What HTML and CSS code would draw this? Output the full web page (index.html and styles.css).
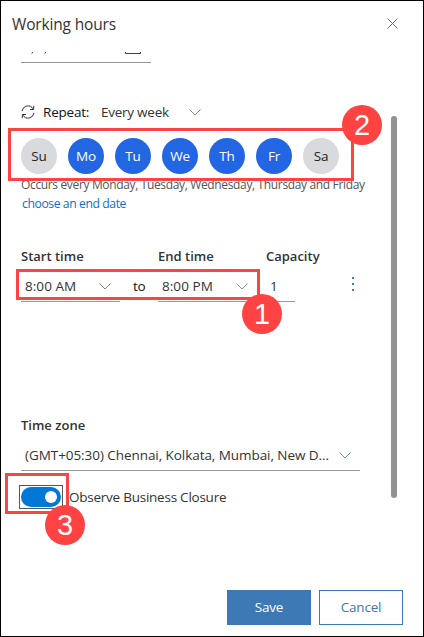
FILE: index.html
```html
<!DOCTYPE html>
<html lang="en">
<head>
<meta charset="utf-8">
<title>Working hours</title>
<link rel="stylesheet" href="styles.css">
</head>
<body>
<div class="panel">
  <header class="header">
    <h1 class="title">Working hours</h1>
    <svg class="close" width="11" height="11" viewBox="0 0 11 11"><path d="M.5.5l10 10M10.5.5l-10 10"/></svg>
  </header>
  <main class="content">
    <div class="date-field">
      <svg width="129" height="10" viewBox="0 0 129 10"><path class="ink" d="M11.6 0l-.7 1.6M24.6 0l-.7 1.6"/><path class="ink" d="M104.5 0v1.5h15V0"/></svg>
    </div>
    <div class="repeat">
      <svg class="sync" width="14" height="14" viewBox="0 0 14 14"><path d="M1 6.2A6 6 0 0 1 12.2 4M12.7.8v3.7H9M13 7.8A6 6 0 0 1 1.8 10M1.3 13.2V9.5H5"/></svg>
      <span class="repeat-label">Repeat:</span>
      <span class="repeat-value">Every week</span>
      <svg class="chevron" width="12" height="7" viewBox="0 0 12 7"><path d="M.5.5L6 6 11.5.5"/></svg>
    </div>
    <div class="days">
      <span class="day">Su</span><span class="day on">Mo</span><span class="day on">Tu</span><span class="day on">We</span><span class="day on">Th</span><span class="day on">Fr</span><span class="day">Sa</span>
    </div>
    <div class="occurs">Occurs every Monday, Tuesday, Wednesday, Thursday and Friday</div>
    <div class="end-link">choose an end date</div>
    <div class="times">
      <span class="label start-label">Start time</span><span></span><span class="label end-label">End time</span><span></span><span class="label cap-label">Capacity</span><span></span>
      <div class="field"><span class="t">8:00 AM</span><svg class="chevron" width="12" height="7" viewBox="0 0 12 7"><path d="M.5.5L6 6 11.5.5"/></svg></div>
      <span class="to">to</span>
      <div class="field"><span class="t">8:00 PM</span><svg class="chevron blue" width="12" height="7" viewBox="0 0 12 7"><path d="M.5.5L6 6 11.5.5"/></svg></div>
      <span></span>
      <div class="field cap"><span>1</span></div>
      <svg class="more" width="2" height="14" viewBox="0 0 2 14"><path d="M0 0h2v2H0zM0 6h2v2H0zM0 12h2v2H0z"/></svg>
    </div>
    <div class="zone">
      <div class="label zone-label">Time zone</div>
      <div class="field zone-field"><span class="zone-value">(GMT+05:30) Chennai, Kolkata, Mumbai, New D...</span><svg class="chevron blue" width="12" height="7" viewBox="0 0 12 7"><path d="M.5.5L6 6 11.5.5"/></svg></div>
    </div>
    <div class="closure">
      <span class="focus"><span class="toggle"><span class="knob"></span></span></span>
      <span class="closure-label">Observe Business Closure</span>
    </div>
  </main>
  <footer class="footer">
    <span class="btn save">Save</span><span class="btn cancel">Cancel</span>
  </footer>
  <div class="scrollbar"></div>
  <div class="mark mark-days"></div><div class="mark mark-time"></div><div class="mark mark-toggle"></div>
  <div class="badge b1">1</div><div class="badge b2">2</div><div class="badge b3">3</div>
</div>
</body>
</html>
```
FILE: styles.css
```css
* { box-sizing: border-box; }
body { margin: 0; background: #fff; font: 13.5px/20px "Open Sans", "Noto Sans", sans-serif; letter-spacing: -.2px; color: #333; }
.panel { position: relative; width: 424px; height: 637px; border: 1px solid #000; display: flex; flex-direction: column; overflow: hidden; white-space: nowrap; }
.header { height: 51px; padding: 13px 25px 0 11px; display: flex; justify-content: space-between; }
.title { margin: 0; font-size: 15.5px; line-height: 21px; font-weight: 400; letter-spacing: -.16px; }
.close { margin-top: 4px; fill: none; stroke: #4c7897; stroke-width: 1; }
.content { height: 527px; padding-left: 20px; overflow: hidden; }
.date-field { width: 130px; height: 11px; border-bottom: 1px solid #949494; display: flex; }
.ink { fill: none; stroke: #404040; }
.repeat { display: flex; align-items: center; height: 20px; margin-top: 39px; color: #111; }
.sync { fill: none; stroke: #333; margin-right: 8px; }
.repeat-label { width: 58px; }
.repeat-value { width: 88px; color: #333; letter-spacing: -.25px; }
.chevron { fill: none; stroke: #8d8778; flex: none; }
.chevron.blue { stroke: #6c98a5; }
.days { display: flex; gap: 11px; margin-top: 16px; }
.day { width: 36px; height: 36px; border-radius: 50%; background: #d9dadd; color: #222; line-height: 36px; text-align: center; }
.day.on { background: #2266e3; color: #fff; }
.occurs { font-size: 12px; line-height: 18px; margin-top: 2px; color: #555; letter-spacing: -.35px; }
.end-link { font-size: 12.2px; line-height: 18px; margin: 1px 0 0 1px; color: #0f6fc9; letter-spacing: -.42px; }
.times { display: grid; grid-template-columns: 99px 38px 99px 8px 30px 60px; grid-template-rows: 20px 36px; margin-top: 33px; }
.label { font-weight: 600; color: #333; font-size: 13px; letter-spacing: 0; }
.cap-label { padding-left: 1px; }
.field { display: flex; align-items: center; justify-content: space-between; border-bottom: 1px solid #9a9a9a; padding: 5px 9px 0 4px; }
.t { letter-spacing: .05px; }
.cap { padding-left: 5px; }
.to { padding: 10px 0 0 13px; color: #111; }
.more { align-self: center; justify-self: end; fill: #4778bd; margin-right: 1px; }
.zone { margin-top: 113px; width: 339px; }
.zone-field { height: 36px; }
.zone-value { letter-spacing: -.06px; }
.closure { display: flex; align-items: center; height: 24px; margin-top: 14px; }
.focus { width: 44px; height: 24px; margin-left: -2px; padding: 1px; border: 1px solid #555; }
.toggle { display: flex; align-items: center; justify-content: flex-end; width: 40px; height: 20px; padding-right: 4px; border-radius: 10px; background: #0078d7; }
.knob { width: 12px; height: 12px; border-radius: 50%; background: #fff; }
.closure-label { margin-left: 6px; letter-spacing: -.24px; }
.footer { display: flex; gap: 8px; justify-content: flex-end; padding: 11px 20px 0 0; }
.btn { width: 84px; height: 35px; line-height: 35px; text-align: center; }
.save { background: #3c79b5; color: #fff; }
.cancel { border: 1px solid #3c79b5; color: #3c79b5; line-height: 33px; }
.scrollbar { position: absolute; left: 390px; top: 115px; width: 6px; height: 382px; border-radius: 3px; background: #919191; }
.mark { position: absolute; border: 3px solid #ff4242; }
.mark-days { left: 7px; top: 127px; width: 346px; height: 53px; }
.mark-time { left: 15px; top: 268px; width: 244px; height: 31px; }
.mark-toggle { left: 4px; top: 472px; width: 64px; height: 41px; }
.badge { position: absolute; width: 40px; height: 40px; border-radius: 50%; background: #ff4242; color: #fff; font: 29px/41px "Liberation Sans", sans-serif; letter-spacing: 0; text-align: center; }
.b1 { left: 241px; top: 293px; }
.b2 { left: 341px; top: 104px; }
.b3 { left: 44px; top: 504px; }
```
